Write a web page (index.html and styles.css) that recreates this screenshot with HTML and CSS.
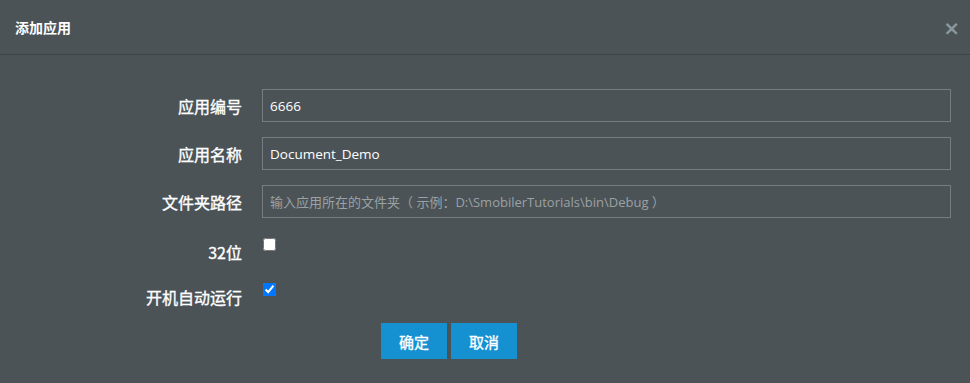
FILE: index.html
```html
<!DOCTYPE html>
<html lang="zh-CN">
<head>
    <meta charset="UTF-8">
    <meta name="viewport" content="width=device-width, initial-scale=1.0">
    <title>添加应用</title>
    <link rel="stylesheet" href="styles.css">
</head>
<body>
    <div class="modal">
        <div class="modal-header">
            <h4 class="modal-title">添加应用</h4>
            <span class="close">&times;</span>
        </div>
        <div class="modal-body">
            <div class="form-row">
                <label class="form-label">应用编号</label>
                <input type="text" class="form-input" value="6666">
            </div>
            <div class="form-row">
                <label class="form-label">应用名称</label>
                <input type="text" class="form-input" value="Document_Demo">
            </div>
            <div class="form-row">
                <label class="form-label">文件夹路径</label>
                <input type="text" class="form-input" placeholder="输入应用所在的文件夹（ 示例：D:\SmobilerTutorials\bin\Debug ）">
            </div>
            <div class="form-row check-row">
                <label class="form-label">32位</label>
                <input type="checkbox" class="form-check">
            </div>
            <div class="form-row check-row">
                <label class="form-label">开机自动运行</label>
                <input type="checkbox" class="form-check" checked>
            </div>
            <div class="actions">
                <button class="btn">确定</button>
                <button class="btn">取消</button>
            </div>
        </div>
    </div>
</body>
</html>
```

FILE: styles.css
```css
body {
    margin: 0;
    background: #4b5357;
    font-family: "Noto Sans CJK SC", "Open Sans", sans-serif;
    color: #fff;
}
.modal {
    width: 970px;
    height: 383px;
}
.modal-header {
    height: 54px;
    border-bottom: 1px solid #3d4447;
    display: flex;
    align-items: center;
    justify-content: space-between;
    padding: 0 10px 0 15px;
}
.modal-title {
    margin: 0;
    font-size: 14px;
    font-weight: bold;
    line-height: 20px;
}
.close {
    font-family: "DejaVu Sans", sans-serif;
    font-size: 20px;
    font-weight: bold;
    color: #8d989e;
    line-height: 20px;
    margin-top: 2px;
}
.modal-body {
    padding: 34px 19px 0 0;
}
.form-row {
    display: flex;
    align-items: flex-start;
    margin-bottom: 15px;
}
.form-label {
    width: 242px;
    flex: none;
    text-align: right;
    font-size: 16px;
    font-weight: normal;
    -webkit-text-stroke: 0.35px #fff;
    line-height: 20px;
    padding-top: 7px;
    margin-right: 20px;
}
.form-input {
    flex: 1;
    height: 33px;
    box-sizing: border-box;
    margin: 0;
    padding: 0 7px;
    background: #4b5357;
    border: 1px solid #767d81;
    color: #fff;
    font-family: "Open Sans", "Noto Sans CJK SC", sans-serif;
    font-size: 13.5px;
    outline: none;
}
.form-input::placeholder {
    color: #9ba1a4;
    font-size: 13px;
}
.check-row {
    height: 30px;
}
.check-row .form-label {
    padding-top: 9px;
}
.form-check {
    margin: 5px 0 0 1px;
    width: 13px;
    height: 13px;
}
.actions {
    display: flex;
    gap: 4px;
    margin-left: 381px;
}
.btn {
    width: 66px;
    height: 36px;
    border: none;
    background: #1591d2;
    color: #fff;
    font-family: "Noto Sans CJK SC", sans-serif;
    font-size: 15px;
    font-weight: normal;
    -webkit-text-stroke: 0.35px #fff;
    cursor: pointer;
    padding: 0;
}
```
